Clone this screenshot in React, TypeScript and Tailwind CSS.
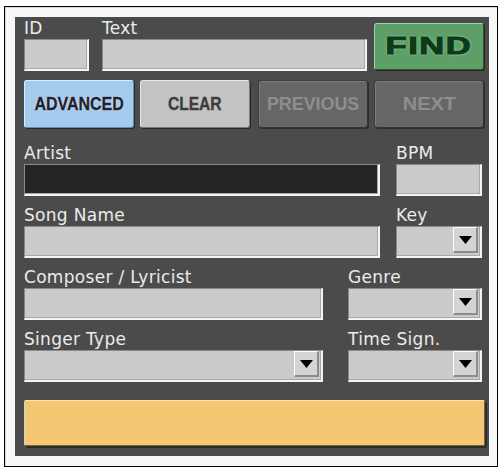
import React from 'react'

function Label({ children }: { children: React.ReactNode }) {
  return (
    <div className="h-[22px] leading-[22px] text-[17px] tracking-[0.3px] text-[#ececec] font-['DejaVu_Sans',sans-serif] whitespace-nowrap">
      {children}
    </div>
  )
}

function Input({ dark }: { dark?: boolean }) {
  return (
    <div
      className={`h-[32px] border-t border-l border-t-[#8a8a8a] border-l-[#8a8a8a] border-b-2 border-r-2 border-b-[#f4f4f4] border-r-[#f4f4f4] shadow-[inset_-1px_-1px_0_#a8a8a8] ${
        dark ? 'bg-[#242424]' : 'bg-[#cbcbcb]'
      }`}
    />
  )
}

function Select() {
  return (
    <div className="h-[32px] flex justify-end pr-[2px] border-t border-l border-t-[#8a8a8a] border-l-[#8a8a8a] border-b-2 border-r-2 border-b-[#f4f4f4] border-r-[#f4f4f4] shadow-[inset_-1px_-1px_0_#a8a8a8] bg-[#cbcbcb]">
      <div className="w-[25px] h-[26px] flex items-center justify-center bg-[#d4d4d4] border-t border-l border-white border-b-2 border-r-2 border-b-[#8c8c8c] border-r-[#8c8c8c]">
        <svg width="13" height="8" viewBox="0 0 13 8">
          <polygon points="0,0 13,0 6.5,8" fill="#000" />
        </svg>
      </div>
    </div>
  )
}

function Field({ label, children }: { label: string; children: React.ReactNode }) {
  return (
    <div>
      <Label>{label}</Label>
      {children}
    </div>
  )
}

export default function App() {
  return (
    <div className="w-[501px] h-[470px] bg-white pl-[4px] pt-[6px]">
      <div className="w-[494px] h-[461px] border border-black bg-[#f7f7f7] shadow-[inset_1px_1px_0_#d8d8d8] p-[10px] pr-[8px]">
        <div className="w-full h-full bg-[#4b4b4b] pl-[9px] pr-[5px] flex flex-col">
          {/* ID / Text / Find */}
          <div className="flex items-end">
            <div className="w-[65px]">
              <Label>ID</Label>
              <Input />
            </div>
            <div className="w-[265px] ml-[13px]">
              <Label>Text</Label>
              <Input />
            </div>
            <button className="ml-[7px] w-[110px] h-[47px] mb-[1px] rounded-[3px] bg-[#5e9f69] border border-t-[#9fd6a7] border-l-[#9fd6a7] border-b-[#2f5a36] border-r-[#2f5a36] shadow-[1px_1px_0_#222] flex items-center justify-center">
              <span className="inline-block scale-x-[1.5] text-[23px] font-bold tracking-[1px] text-[#0d3a17] font-['Liberation_Sans',Arial,sans-serif] [-webkit-text-stroke:1px_#0d3a17] [text-shadow:0_0_2px_#b4e6ba,0_0_2px_#a8dcaf]">
                FIND
              </span>
            </button>
          </div>

          {/* Buttons */}
          <div className="flex mt-[9px] font-['Liberation_Sans',Arial,sans-serif] font-bold">
            <button className="w-[110px] h-[48px] rounded-[3px] bg-[#a3cbee] border border-t-[#d8ecff] border-l-[#d8ecff] border-b-[#6a8cae] border-r-[#6a8cae] shadow-[1px_1px_0_#262626] flex items-center justify-center">
              <span className="inline-block scale-x-[0.84] text-[19px] text-[#1d2230] [-webkit-text-stroke:0.4px_#1d2230] [text-shadow:0_0_1px_#fff,0_0_2px_#fff]">
                ADVANCED
              </span>
            </button>
            <button className="ml-[6px] w-[110px] h-[48px] rounded-[3px] bg-[#c3c3c3] border border-t-[#e6e6e6] border-l-[#e6e6e6] border-b-[#7a7a7a] border-r-[#7a7a7a] shadow-[1px_1px_0_#262626] flex items-center justify-center">
              <span className="inline-block scale-x-[0.82] text-[19px] text-[#3c3c3c] [-webkit-text-stroke:0.4px_#3c3c3c] [text-shadow:0_0_1px_#dcdcdc]">
                CLEAR
              </span>
            </button>
            <button className="ml-[8px] w-[110px] h-[48px] rounded-[3px] bg-[#666666] border border-t-[#3c3c3c] border-l-[#3c3c3c] border-b-[#333] border-r-[#333] shadow-[inset_1px_1px_0_#7c7c7c,1px_1px_0_#2e2e2e] flex items-center justify-center">
              <span className="inline-block scale-x-[0.94] text-[19px] text-[#8e8e8e]">PREVIOUS</span>
            </button>
            <button className="ml-[6px] w-[110px] h-[48px] rounded-[3px] bg-[#666666] border border-t-[#3c3c3c] border-l-[#3c3c3c] border-b-[#333] border-r-[#333] shadow-[inset_1px_1px_0_#7c7c7c,1px_1px_0_#2e2e2e] flex items-center justify-center">
              <span className="inline-block scale-x-[1.05] text-[19px] text-[#8e8e8e]">NEXT</span>
            </button>
          </div>

          {/* Fields */}
          <div className="grid grid-cols-[356px_86px] gap-x-[16px] mt-[14px]">
            <Field label="Artist">
              <Input dark />
            </Field>
            <Field label="BPM">
              <Input />
            </Field>
          </div>
          <div className="grid grid-cols-[356px_86px] gap-x-[16px] mt-[8px]">
            <Field label="Song Name">
              <Input />
            </Field>
            <Field label="Key">
              <Select />
            </Field>
          </div>
          <div className="grid grid-cols-[299px_134px] gap-x-[25px] mt-[8px]">
            <Field label="Composer / Lyricist">
              <Input />
            </Field>
            <Field label="Genre">
              <Select />
            </Field>
          </div>
          <div className="grid grid-cols-[299px_134px] gap-x-[25px] mt-[8px]">
            <Field label="Singer Type">
              <Select />
            </Field>
            <Field label="Time Sign.">
              <Select />
            </Field>
          </div>

          {/* Status bar */}
          <div className="mt-[18px] w-[461px] h-[46px] rounded-[2px] bg-[#f4c872] border border-t-[#fde6ae] border-l-[#d2d2d2] border-b-[#7a6334] border-r-[#7a6334] shadow-[2px_2px_0_#2c2c2c]" />
        </div>
      </div>
    </div>
  )
}
